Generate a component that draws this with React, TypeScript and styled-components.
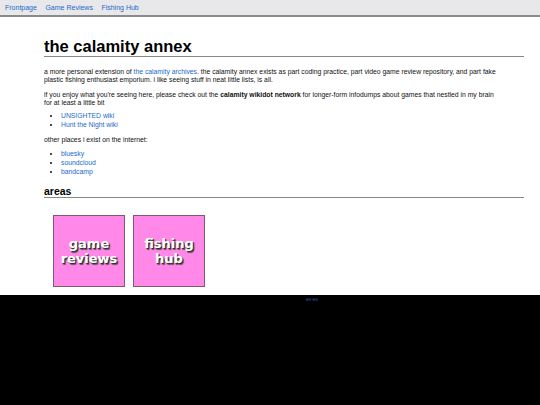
import React from "react";
import styled, { createGlobalStyle } from "styled-components";

const Global = createGlobalStyle`
  html, body { margin: 0; padding: 0; background: #000; }
  body { font-family: "Liberation Sans", Arial, sans-serif; }
  a { color: #1b6ac9; text-decoration: none; }
`;

const Nav = styled.nav`
  display: flex;
  gap: 8.5px;
  height: 15px;
  align-items: center;
  padding: 0 5px;
  background: #e8e8ea;
  border-bottom: 2px solid #8a8a8a;
  font-size: 7px;
`;

const Page = styled.main`
  background: #fff;
  padding: 21px 16px 8px 44px;
  color: #111;
  font-size: 6.8px;
  line-height: 8.4px;
`;

const H1 = styled.h1`
  margin: 0 0 11px;
  font-size: 16.5px;
  line-height: 16px;
  font-weight: bold;
  border-bottom: 1px solid #888;
  padding-bottom: 2px;
  color: #000;
`;

const P = styled.p<{ $gap?: number }>`
  margin: 0 0 ${(p) => p.$gap ?? 6}px;
  padding-right: 28px;
`;

const List = styled.ul`
  margin: 0 0 7px;
  padding-left: 17px;
  li { line-height: 9px; }
`;

const H2 = styled.h2`
  margin: 9px 0 0;
  font-size: 10.5px;
  line-height: 12px;
  font-weight: bold;
  color: #000;
  border-bottom: 1px solid #888;
  padding-bottom: 0;
`;

const Areas = styled.div`
  display: flex;
  gap: 8px;
  padding: 17px 0 0 9px;
`;

const Tile = styled.a`
  width: 70px;
  height: 70px;
  background: #ff88e8;
  border: 1px solid #7a5a72;
  display: flex;
  align-items: center;
  justify-content: center;
  text-align: center;
  color: #fff;
  font-family: "DejaVu Sans", Verdana, sans-serif;
  font-weight: bold;
  font-size: 13px;
  line-height: 15px;
  text-shadow: 1px 1px 0 #333, 1.5px 1.5px 1px #555;
`;

const Footer = styled.footer`
  height: 110px;
  background: #000;
  text-align: center;
  padding-top: 1px;
  font-size: 5px;
  color: #2a5fa8;
  padding-left: 84px;
`;

export default function App() {
  return (
    <>
      <Global />
      <Nav>
        <a href="#">Frontpage</a>
        <a href="#">Game Reviews</a>
        <a href="#">Fishing Hub</a>
      </Nav>
      <Page>
        <H1>the calamity annex</H1>
        <P>
          a more personal extension of <a href="#">the calamity archives</a>. the calamity annex exists as part coding
          practice, part video game review repository, and part fake plastic fishing enthusiast emporium. i like
          seeing stuff in neat little lists, is all.
        </P>
        <P $gap={3}>
          if you enjoy what you're seeing here, please check out the <b>calamity wikidot network</b> for longer-form
          infodumps about games that nestled in my brain for at least a little bit
        </P>
        <List>
          <li><a href="#">UNSIGHTED wiki</a></li>
          <li><a href="#">Hunt the Night wiki</a></li>
        </List>
        <P $gap={5}>other places i exist on the internet:</P>
        <List>
          <li><a href="#">bluesky</a></li>
          <li><a href="#">soundcloud</a></li>
          <li><a href="#">bandcamp</a></li>
        </List>
        <H2>areas</H2>
        <Areas>
          <Tile href="#">game<br />reviews</Tile>
          <Tile href="#">fishing<br />hub</Tile>
        </Areas>
      </Page>
      <Footer>ex-ex</Footer>
    </>
  );
}
